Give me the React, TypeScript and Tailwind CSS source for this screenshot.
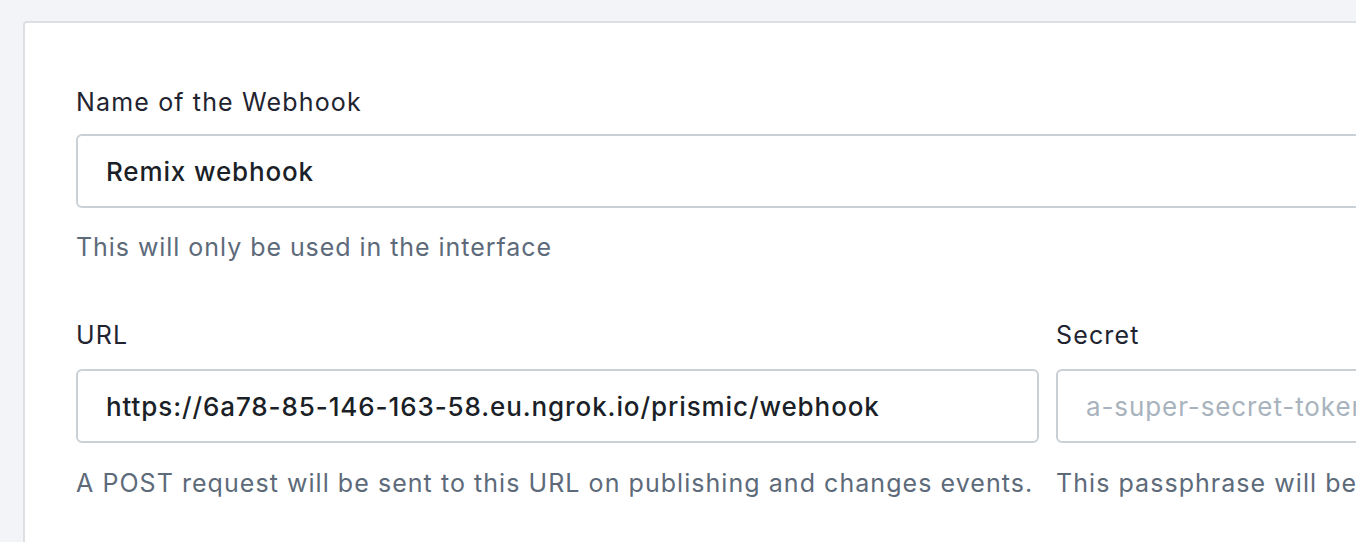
export default function App() {
  return (
    <div
      className="h-[542px] w-[1356px] overflow-hidden bg-[#f3f4f7] pl-[23px] pt-[21px]"
      style={{ fontFamily: "Inter, 'Noto Sans', sans-serif" }}
    >
      <div className="h-[600px] w-[1600px] rounded-tl-[4px] border-2 border-[#dcdfe4] bg-white pl-[51px] pt-[63px]">
        <div className="w-[1500px]">
          <label className="block text-[25px] leading-[32px] tracking-[1.15px] text-[#1f2430]">Name of the Webhook</label>
          <div className="mt-[16px] flex h-[74px] items-center rounded-[6px] border-2 border-[#c9d0d6] pl-[28px] text-[26px] font-medium tracking-[0.85px] text-[#1b1f27]">
            Remix webhook
          </div>
          <p className="mt-[23px] text-[25px] leading-[32px] tracking-[0.95px] text-[#5d6a7a]">This will only be used in the interface</p>

          <div className="mt-[56px] grid grid-cols-[963px_1fr] gap-x-[17px]">
            <div>
              <label className="block text-[25px] leading-[32px] tracking-[1.15px] text-[#1f2430]">URL</label>
              <div className="mt-[18px] flex h-[74px] items-center rounded-[6px] border-2 border-[#c9d0d6] pl-[28px] text-[26px] font-medium tracking-[0.9px] text-[#1b1f27]">
                https://6a78-85-146-163-58.eu.ngrok.io/prismic/webhook
              </div>
              <p className="mt-[24px] whitespace-nowrap text-[25px] leading-[32px] tracking-[1.05px] text-[#5d6a7a]">
                A POST request will be sent to this URL on publishing and changes events.
              </p>
            </div>
            <div>
              <label className="block text-[25px] leading-[32px] tracking-[1.15px] text-[#1f2430]">Secret</label>
              <div className="mt-[18px] flex h-[74px] items-center whitespace-nowrap rounded-[6px] border-2 border-[#c9d0d6] pl-[28px] text-[26px] tracking-[0.9px] text-[#a9b3bd]">
                a-super-secret-token
              </div>
              <p className="mt-[24px] whitespace-nowrap text-[25px] leading-[32px] tracking-[1.05px] text-[#5d6a7a]">
                This passphrase will be sent with the request.
              </p>
            </div>
          </div>
        </div>
      </div>
    </div>
  );
}
